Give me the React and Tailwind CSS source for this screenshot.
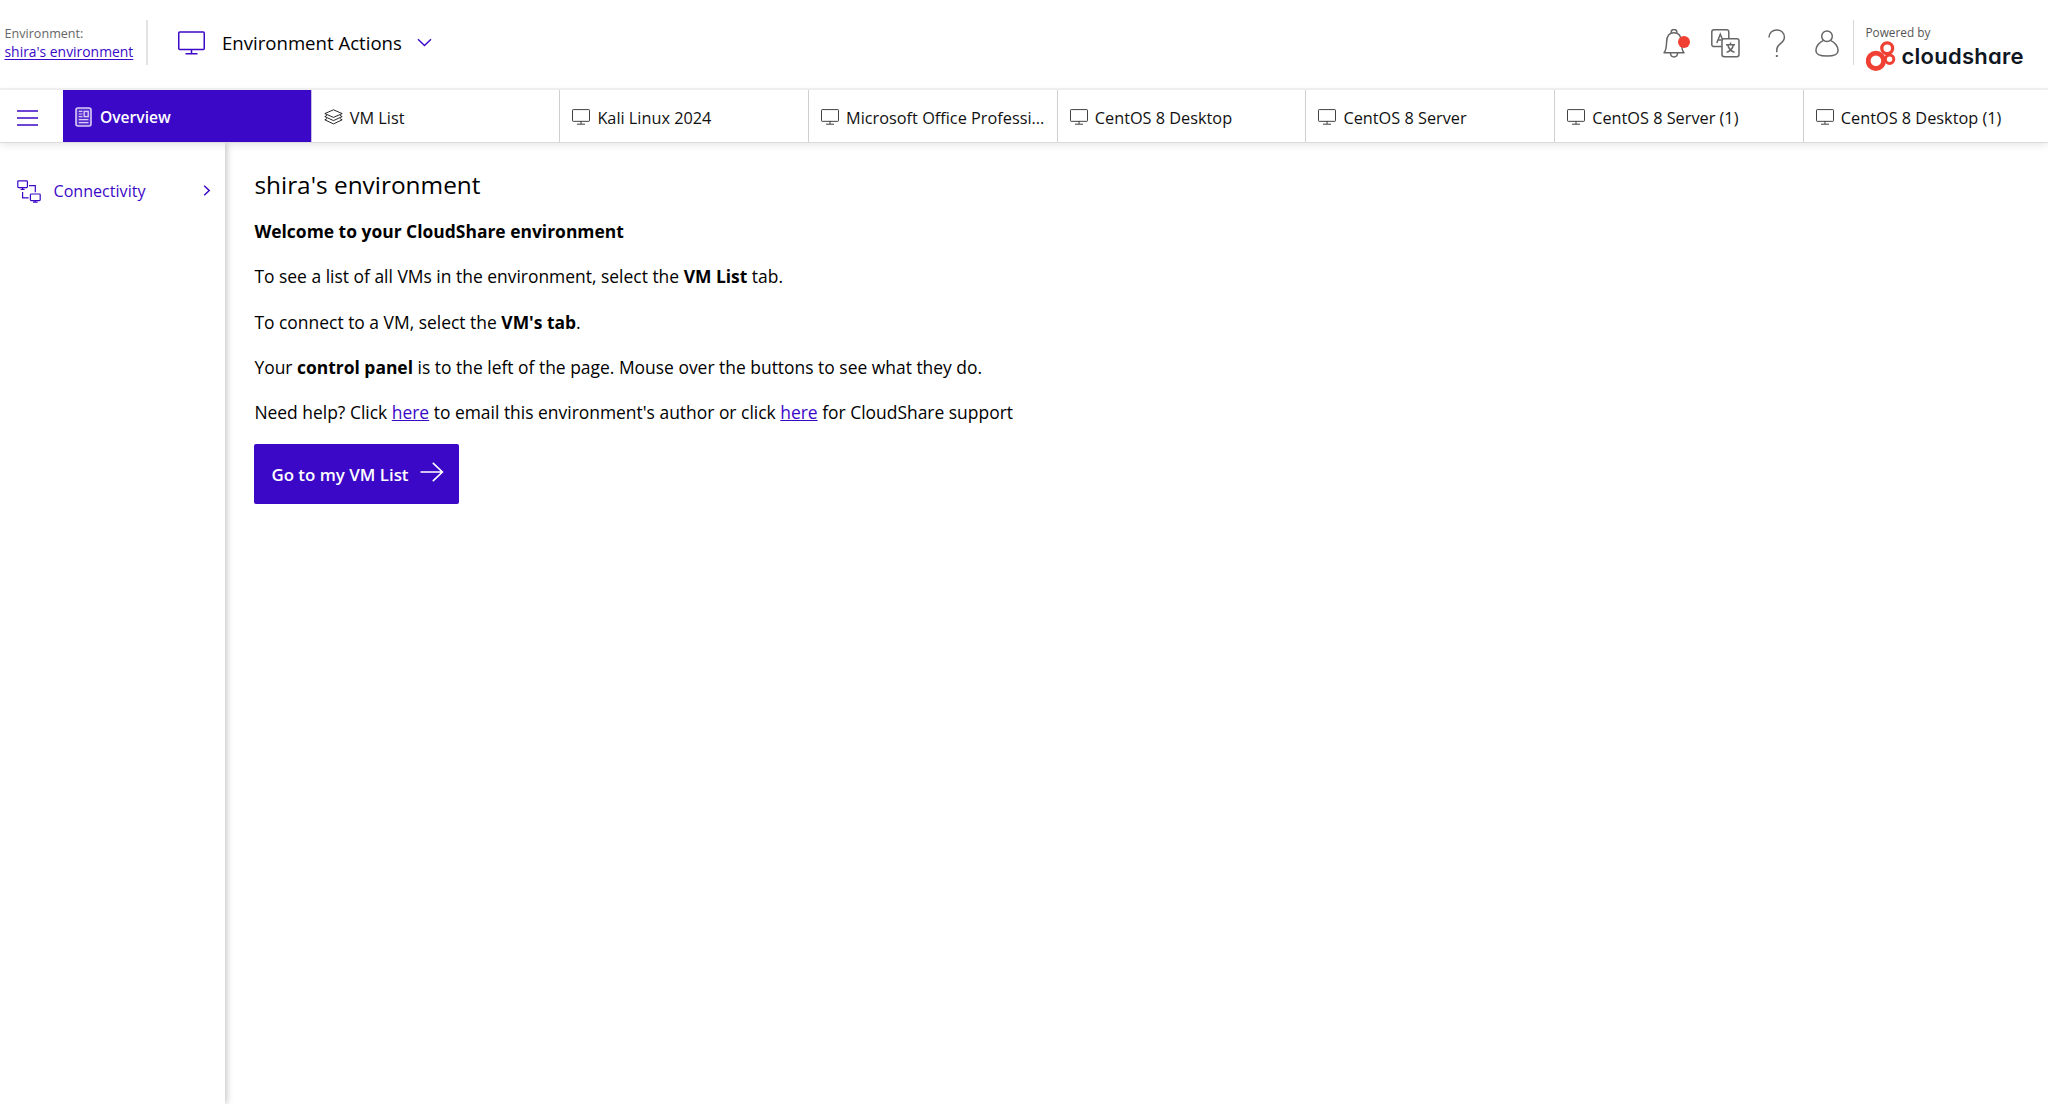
const vms = [
  "Kali Linux 2024",
  "Microsoft Office Professi...",
  "CentOS 8 Desktop",
  "CentOS 8 Server",
  "CentOS 8 Server (1)",
  "CentOS 8 Desktop (1)",
];

const MonitorIcon = ({ className, strokeWidth = 1.5 }) => (
  <svg className={className} viewBox="0 0 27 24" fill="none" stroke="currentColor" strokeWidth={strokeWidth}>
    <rect x="0.75" y="0.9" width="25.5" height="17.6" rx="1" />
    <path d="M13.5 18.5v4M7.5 22.8h12" />
  </svg>
);

const LayersIcon = () => (
  <svg className="w-[19px] h-[16px] shrink-0" viewBox="0 0 19 16" fill="none" stroke="currentColor" strokeWidth="0.9" strokeLinejoin="round">
    <path d="M9.5 0.8L18.2 4.6L9.5 8.4L0.8 4.6z" />
    <path d="M3 6.4L0.8 7.6L9.5 11.6L18.2 7.6L16 6.4" />
    <path d="M3 9.6L0.8 10.8L9.5 14.9L18.2 10.8L16 9.6" />
  </svg>
);

const OverviewIcon = () => (
  <svg className="w-[17px] h-5 shrink-0" viewBox="0 0 17 20" fill="none" stroke="currentColor" strokeWidth="1.2" opacity="0.8">
    <rect x="1" y="1" width="15" height="18" rx="2" strokeWidth="1.6" fill="currentColor" fillOpacity="0.2" />
    <path d="M3.8 4.4h3.6M3.8 7h3.6M3.8 9.6h3.6M3.8 12.6h9.6M3.8 15.6h9.6" />
    <rect x="9.2" y="4.4" width="4" height="5.2" strokeWidth="1.4" />
  </svg>
);

const ConnectivityIcon = () => (
  <svg className="w-6 h-[23px] shrink-0" viewBox="0 0 24 23" fill="none" stroke="currentColor" strokeWidth="1.2">
    <rect x="0.8" y="0.8" width="9.6" height="6.8" rx="0.8" />
    <path d="M5.6 7.6v1.8M3.6 9.4h4" />
    <rect x="13.4" y="14" width="9.8" height="6.6" rx="0.8" />
    <path d="M18.3 20.6v1.6M16 22.2h4.6" />
    <path d="M12 5.6h6.3v6.6M5.6 12v5.8h6" />
  </svg>
);

const BellIcon = () => (
  <svg className="w-[23px] h-[29px]" viewBox="0 0 23 29" fill="none" stroke="currentColor" strokeWidth="1.5" strokeLinejoin="round">
    <path d="M8.2 3.8V3a2.8 2.5 0 0 1 5.6 0v0.8" />
    <path d="M1 23.8C3.2 21.6 3.4 19 3.6 13C3.8 6.6 7 3.8 11 3.8S18.2 6.6 18.4 13C18.6 19 18.8 21.6 21 23.8z" />
    <path d="M7.4 24c0.2 2.6 1.6 3.9 3.6 3.9s3.4-1.3 3.6-3.9" />
  </svg>
);

const TranslateIcon = () => (
  <svg className="w-[29px] h-[29px]" viewBox="0 0 29 29" fill="none" stroke="currentColor" strokeWidth="1.5">
    <path d="M11 17.6H3a2.2 2.2 0 0 1-2.2-2.2V3A2.2 2.2 0 0 1 3 0.8h12.6A2.2 2.2 0 0 1 17.8 3v6.8" />
    <path d="M5.8 14L9.3 5.2L11.4 10.2M7 11h3.6" />
    <rect x="11" y="9.8" width="17" height="18" rx="2.2" />
    <path d="M19.5 13.4v2M15 15.8h9M16.8 16c0.8 3.4 3.2 6.2 6.8 7.4M22.4 16c-0.8 3.4-3.2 6.2-6.8 7.4" />
  </svg>
);

const HelpIcon = () => (
  <svg className="w-[18px] h-[29px]" viewBox="0 0 18 29" fill="none" stroke="currentColor" strokeWidth="1.5">
    <path d="M1 8.6C1 4 4.4 1 8.8 1s7.6 3 7.6 7.2c0 3-1.6 4.6-4.2 6.6C9.8 16.8 8.8 18.2 8.8 20.6v2.6" />
    <path d="M8.8 26v2" strokeWidth="1.9" />
  </svg>
);

const UserIcon = () => (
  <svg className="w-6 h-[27px]" viewBox="0 0 24 27" fill="none" stroke="currentColor" strokeWidth="1.5">
    <circle cx="12" cy="6.2" r="5.3" />
    <path d="M8.6 10.4C3.8 12.4 0.9 16.8 0.9 20.4C0.9 24.6 5 26 12 26s11.1-1.4 11.1-5.6c0-3.6-2.9-8-7.7-10" />
  </svg>
);

const Logo = () => (
  <svg className="w-[30px] h-[30px] shrink-0" viewBox="0 0 30 30" fill="none" stroke="#ef4033">
    <circle cx="9.9" cy="19.8" r="7.7" strokeWidth="4.8" />
    <circle cx="21.2" cy="7.2" r="5.4" strokeWidth="3.3" />
    <circle cx="23.6" cy="18.2" r="4.2" strokeWidth="3" />
  </svg>
);

const Tab = ({ icon, label, active }) => (
  <button
    className={`w-[248.7px] shrink-0 flex items-center pl-3 border-r whitespace-nowrap ${
      active
        ? "gap-2 bg-[#3c08c8] text-white font-semibold text-[15.6px] border-[#c4bfe0]"
        : "gap-[7px] text-[#111] text-[16.3px] border-[#cfcfcf]"
    }`}
  >
    <span className="pt-0.5">{icon}</span>
    <span className="pt-1">{label}</span>
  </button>
);

const Header = () => (
  <header className="h-[90px] shrink-0 flex justify-between border-b-2 border-[#f4f4f4]">
    <div className="flex pt-5">
      <div className="w-[147.5px] h-[45px] pl-[4.5px] pt-1 border-r-2 border-[#e4e4e4]">
        <div className="text-[12.6px] leading-[19px] text-[#666]">Environment:</div>
        <a href="#" className="block text-[13.9px] leading-[18px] text-[#3c08c8] underline underline-offset-2 whitespace-nowrap">shira's environment</a>
      </div>
      <button className="h-[45px] flex items-center pl-[30.5px] text-[18.6px] text-black">
        <MonitorIcon className="w-[27px] h-6 mr-[17px] text-[#3c08c8]" />
        <span>Environment Actions</span>
        <svg className="w-[15px] h-[9px] ml-[15px]" viewBox="0 0 15 9" fill="none" stroke="#3c08c8" strokeWidth="1.4">
          <path d="M1 1.2l6.5 6.3l6.5-6.3" />
        </svg>
      </button>
    </div>

    <div className="flex pt-5 pr-[23px] text-[#666]">
      <div className="flex items-center h-[47px]">
        <div className="relative mr-[25px]">
          <BellIcon />
          <span className="absolute left-[15px] top-[7px] w-3 h-3 rounded-full bg-[#ef4033]" />
        </div>
        <div className="mr-7"><TranslateIcon /></div>
        <div className="mr-[29px]"><HelpIcon /></div>
        <div className="mr-[14px]"><UserIcon /></div>
      </div>
      <div className="h-[45px] w-[172px] border-l border-[#d8d8d8] pl-[11.5px]">
        <div className="text-[11.8px] leading-[16px] pt-1 text-[#555]">Powered by</div>
        <div className="flex gap-[6px] pt-px">
          <Logo />
          <span className="font-['Inter'] font-semibold text-[22px] leading-[30px] tracking-[0.25px] text-[#101622] [font-feature-settings:'cv11']">cloudshare</span>
        </div>
      </div>
    </div>
  </header>
);

export default function App() {
  return (
    <div className="h-[1104px] flex flex-col overflow-hidden bg-white text-black font-['Open_Sans',sans-serif]">
      <Header />

      {/* Tabs */}
      <nav className="relative z-20 h-[53px] shrink-0 flex bg-white border-b border-[#dcdcdc] shadow-[0_2px_8px_rgba(0,0,0,0.1)]">
        <button className="w-[63px] shrink-0 flex items-center pl-[17px] pt-[3px] text-[#3c08c8]">
          <svg className="w-[21px] h-4" viewBox="0 0 21 16" fill="none" stroke="currentColor" strokeWidth="1.4">
            <path d="M0 1h21M0 8h21M0 15h21" />
          </svg>
        </button>
        <Tab active icon={<OverviewIcon />} label="Overview" />
        <Tab icon={<LayersIcon />} label="VM List" />
        {vms.map((vm) => (
          <Tab key={vm} icon={<MonitorIcon className="w-[18px] h-4 shrink-0" strokeWidth={1.2} />} label={vm} />
        ))}
      </nav>

      <div className="flex flex-1">
        {/* Sidebar */}
        <aside className="relative z-10 w-[225px] shrink-0 bg-white pt-[36px] shadow-[2px_0_6px_rgba(0,0,0,0.22)]">
          <button className="w-full flex items-center pl-[17px] pr-[14px] text-[#3c08c8]">
            <ConnectivityIcon />
            <span className="ml-[12.5px] text-[16.1px] leading-[25px]">Connectivity</span>
            <svg className="w-2 h-[11px] ml-auto mb-0.5" viewBox="0 0 8 11" fill="none" stroke="currentColor" strokeWidth="1.5">
              <path d="M1.2 0.8l5 4.7l-5 4.7" />
            </svg>
          </button>
        </aside>

        <main className="flex-1 pl-[29.4px] pt-[26px] text-[17.44px] leading-[23.8px]">
          <h1 className="text-[24.4px] leading-[32px]">shira's environment</h1>
          <div className="mt-[19px] flex flex-col gap-[21.5px]">
            <p className="font-bold">Welcome to your CloudShare environment</p>
            <p>To see a list of all VMs in the environment, select the <b>VM List</b> tab.</p>
            <p>To connect to a VM, select the <b>VM's tab</b>.</p>
            <p>Your <b>control panel</b> is to the left of the page. Mouse over the buttons to see what they do.</p>
            <p>
              Need help? Click <a href="#" className="text-[#3c08c8] underline">here</a> to email this environment's author or click{" "}
              <a href="#" className="text-[#3c08c8] underline">here</a> for CloudShare support
            </p>
          </div>
          <button className="mt-[19px] w-[205px] h-[60px] flex items-center pl-[17px] rounded-xs bg-[#3c08c8] text-white text-[16.9px] font-semibold">
            <span className="pt-0.5">Go to my VM List</span>
            <svg className="w-6 h-5 ml-[11px] mb-1" viewBox="0 0 24 20" fill="none" stroke="currentColor" strokeWidth="1.6">
              <path d="M0.5 10h22M12.8 0.8l9.6 9.2l-9.6 9.2" />
            </svg>
          </button>
        </main>
      </div>
    </div>
  );
}
